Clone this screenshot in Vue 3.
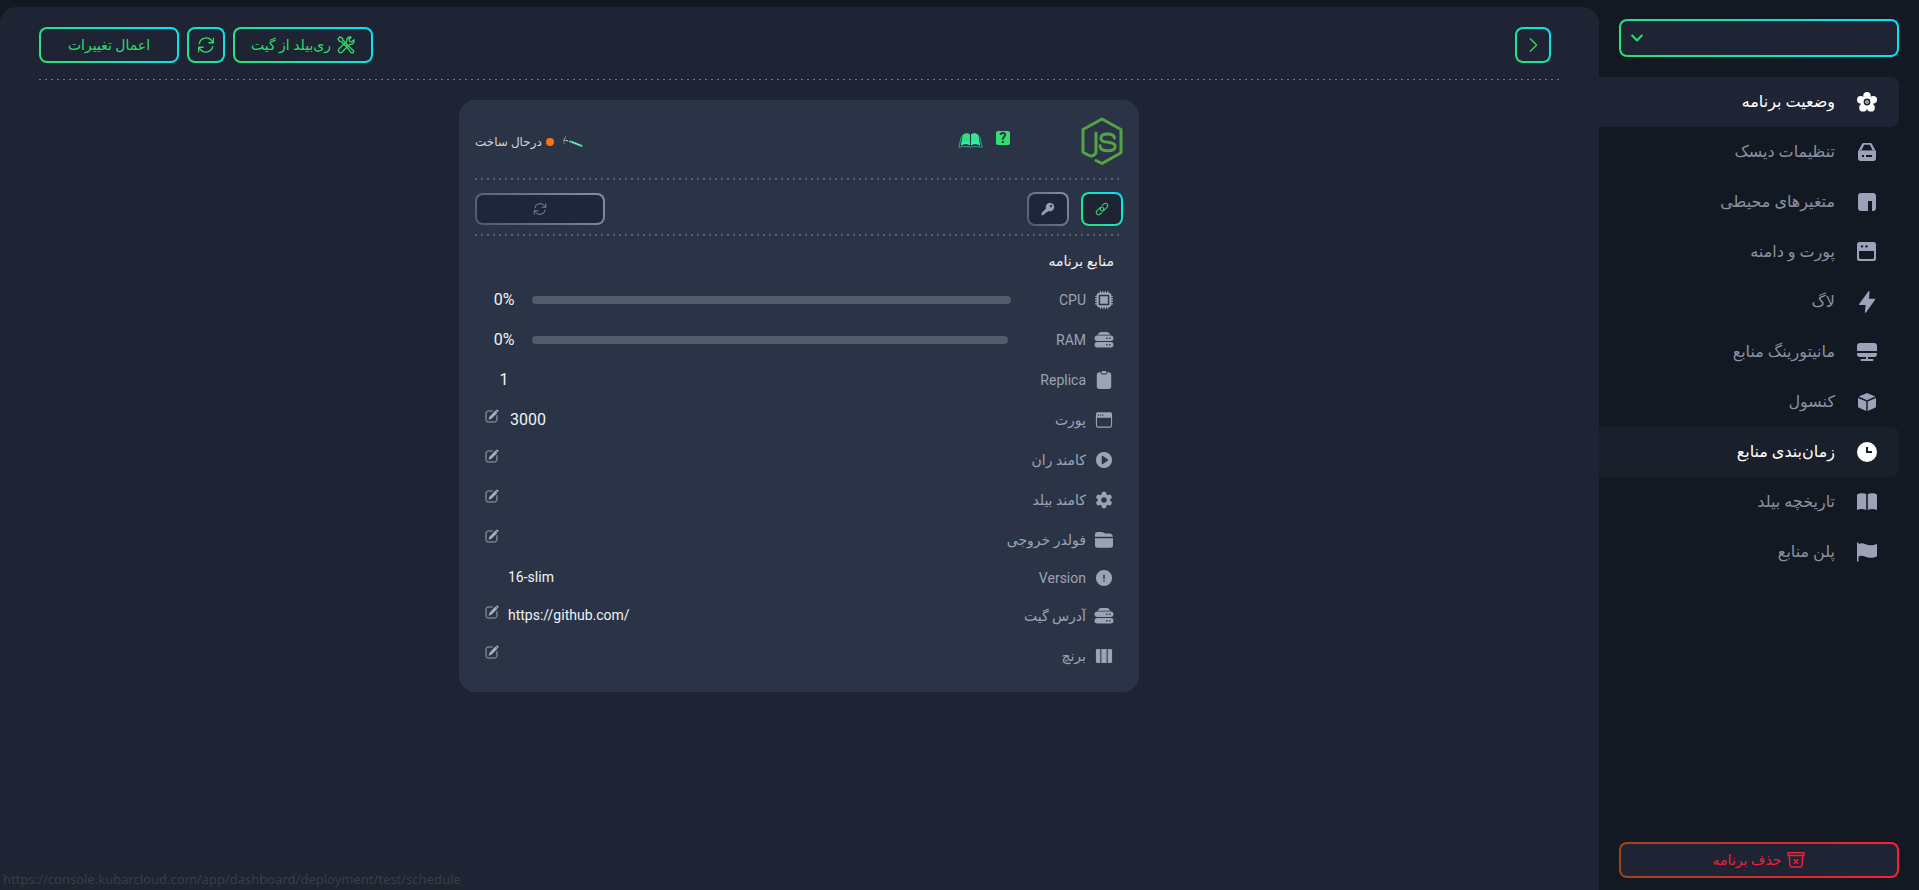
<script setup>
const menu = [
  { label: 'وضعیت برنامه', icon: 'flower', state: 'active' },
  { label: 'تنظیمات دیسک', icon: 'disk' },
  { label: 'متغیرهای محیطی', icon: 'npm' },
  { label: 'پورت و دامنه', icon: 'window' },
  { label: 'لاگ', icon: 'bolt' },
  { label: 'مانیتورینگ منابع', icon: 'monitor' },
  { label: 'کنسول', icon: 'cube' },
  { label: 'زمان‌بندی منابع', icon: 'clock', state: 'hovered' },
  { label: 'تاریخچه بیلد', icon: 'book' },
  { label: 'پلن منابع', icon: 'flag' }
]

const rows = [
  { label: 'CPU', icon: 'cpu', percent: 0 },
  { label: 'RAM', icon: 'server', percent: 0 },
  { label: 'Replica', icon: 'clipboard', count: '1' },
  { label: 'پورت', icon: 'browser', edit: true, value: '3000', large: true },
  { label: 'کامند ران', icon: 'play', edit: true },
  { label: 'کامند بیلد', icon: 'gear', edit: true },
  { label: 'فولدر خروجی', icon: 'folder', edit: true },
  { label: 'Version', icon: 'info', value: '16-slim', compact: true },
  { label: 'آدرس گیت', icon: 'server', edit: true, value: 'https://github.com/' },
  { label: 'برنچ', icon: 'columns', edit: true }
]

const icons = {
  flower: '<circle cx="10" cy="3.700" r="3.700"/><circle cx="16.300" cy="7.800" r="3.700"/><circle cx="13.900" cy="15.700" r="3.900"/><circle cx="6.100" cy="15.700" r="3.900"/><circle cx="3.700" cy="7.800" r="3.700"/><circle cx="10" cy="10" r="6.500"/><circle cx="10" cy="10" r="2.600" fill="#fff" stroke="#1e2433" stroke-width="1.600"/><circle cx="10" cy="10" r="1.300" fill="#8b90a0"/>',
  disk: '<path fill-rule="evenodd" d="M7 1h6c1 0 1.700.4 2.100 1.300L18.500 8.500h-17L4.900 2.300C5.300 1.400 6 1 7 1Zm.2 1.700L4.200 8.700h11.600l-3-6Z"/><path fill-rule="evenodd" d="M1 8.500h18v8c0 1.500-1 2.500-2.500 2.500h-13C2 19 1 18 1 16.500ZM5 13v2h2v-2Zm4 0v2h6v-2Z"/>',
  npm: '<path d="M4 1h12a3 3 0 0 1 3 3v12a3 3 0 0 1-3 3h-1V9h-4v10H4a3 3 0 0 1-3-3V4a3 3 0 0 1 3-3Z"/>',
  window: '<path fill-rule="evenodd" d="M2.500 0h14a2.500 2.500 0 0 1 2.500 2.500v14a2.500 2.500 0 0 1-2.500 2.500h-14A2.500 2.500 0 0 1 0 16.500v-14A2.500 2.500 0 0 1 2.500 0ZM2 9v6c0 1.500.5 2 1.500 2h12c1 0 1.500-.5 1.500-2V9ZM5 3.200a1.200 1.200 0 1 0 .1 0Zm4.500 0a1.200 1.200 0 1 0 .1 0Z"/>',
  bolt: '<path d="M11.500-.8c.6-.4 1 0 1 .6L12 6.800h5.300c.8 0 1 .6.6 1.200L9 20.600c-.5.600-1.200.3-1.100-.5l.7-7H3c-.9 0-1.200-.7-.7-1.400Z"/>',
  monitor: '<path d="M3 1h14a3 3 0 0 1 3 3v5H0V4a3 3 0 0 1 3-3ZM0 11h20v1a3 3 0 0 1-3 3h-6v2h4.500a1 1 0 0 1 0 2h-11a1 1 0 0 1 0-2H9v-2H3a3 3 0 0 1-3-3Z"/>',
  cube: '<path d="m10 1 8.300 3.500L10 8.200 1.700 4.500ZM1 6l8.300 3.600V19L2 15.800c-.7-.3-1-.8-1-1.400Zm18 0-8.300 3.600V19l7.300-3.200c.7-.3 1-.8 1-1.400Z"/>',
  clock: '<path fill-rule="evenodd" d="M10 0a10 10 0 1 1 0 20 10 10 0 0 1 0-20ZM9 5v6h6V9h-4V5Z"/>',
  book: '<path d="M0 2.500C3 .8 6.500 1 9.200 2v16C6.500 16.800 3 16.500 0 18ZM20 2.500C17 .8 13.500 1 10.800 2v16c2.700-1.200 6.200-1.500 9.200 0Z"/>',
  flag: '<path d="M0 .500h1.500V2c2-.8 4.200-1 7 .2 3.600 1.500 7 1.400 11.500-.2v12.500c-4.500 1.600-7.900 1.700-11.500.2-2.800-1.200-5-1-7-.2v5H0Z"/>',
  cpu: '<rect x="3" y="3" width="14" height="14" rx="2" fill="none" stroke="currentColor" stroke-width="2.200"/><rect x="5.700" y="5.700" width="8.600" height="8.600" rx=".8"/><path d="M5.200 1.200h10M5.200 18.800h10M1.200 5.200v10M18.800 5.200v10" stroke="currentColor" stroke-width="2" stroke-dasharray="1.600 1.100"/>',
  server: '<path d="M3 4.200C4.300 2 5 1 6.500 1h7c1.500 0 2.200 1 3.500 3.200Z"/><path fill-rule="evenodd" d="M2.500 5h15a2.900 2.900 0 0 1 0 6h-15a2.900 2.900 0 0 1 0-6ZM12.500 7.200v1.600H14V7.200Zm3.200 0v1.600h1.500V7.200ZM2.500 12.300h15a2.900 2.900 0 0 1 0 6h-15a2.900 2.900 0 0 1 0-6Zm10 2.200v1.600H14v-1.600Zm3.200 0v1.600h1.500v-1.600Z"/>',
  clipboard: '<path d="M5 1.500h1.300c0 1.700.7 2.500 2.200 2.500h3c1.500 0 2.200-.8 2.200-2.500H15a3 3 0 0 1 3 3V17a3 3 0 0 1-3 3H5a3 3 0 0 1-3-3V4.500a3 3 0 0 1 3-3Z"/><rect x="7.200" y="0" width="5.600" height="2.800" rx="1.400"/>',
  browser: '<path fill-rule="evenodd" d="M3 1.500h14a2 2 0 0 1 2 2v13a2 2 0 0 1-2 2H3a2 2 0 0 1-2-2v-13a2 2 0 0 1 2-2ZM2.200 7.500v8.200c0 1 .4 1.500 1.300 1.500h13c.9 0 1.300-.5 1.300-1.500V7.500ZM3 4v1.200h1.300V4Zm2.500 0v1.200h1.300V4Zm2.500 0v1.200h1.300V4Z"/>',
  play: '<path fill-rule="evenodd" d="M10 1a9 9 0 1 1 0 18 9 9 0 0 1 0-18ZM7.500 5.800v8.400c0 .5.500.7.900.5l6-4.100c.4-.3.400-.8 0-1.100l-6-4.200c-.4-.3-.9 0-.9.500Z"/>',
  gear: '<path fill-rule="evenodd" stroke="currentColor" stroke-width="1.400" stroke-linejoin="round" d="M8.600 1.500h2.800l.7 2.600 2 1.200 2.600-.7 1.400 2.500-1.900 1.900v2l1.900 1.900-1.400 2.500-2.600-.7-2 1.200-.7 2.600H8.600l-.7-2.600-2-1.200-2.600.7-1.400-2.500L3.800 11V9L1.900 7.100l1.400-2.500 2.600.7 2-1.200ZM10 6.300a3.700 3.700 0 1 0 0 7.400 3.700 3.700 0 0 0 0-7.400Z"/>',
  folder: '<path d="M0 6.500V3.600A2.600 2.600 0 0 1 2.600 1h5c1.800 0 2.300 1.700 4 1.700h4.900c1.800 0 3.200 1.500 3.500 3.800ZM0 8h20v7.700a2.800 2.800 0 0 1-2.800 2.800H2.800A2.800 2.800 0 0 1 0 15.700Z"/>',
  info: '<path fill-rule="evenodd" d="M10 1a9 9 0 1 1 0 18 9 9 0 0 1 0-18ZM9.200 6v5.300h1.600V6Zm0 6.500v1.500h1.600v-1.500Z"/>',
  columns: '<path d="M2.500 2.300h3.400v15.400H2.500A1.500 1.500 0 0 1 1 16.200V3.800a1.500 1.500 0 0 1 1.500-1.500ZM7.100 2.300h5.800v15.400H7.100ZM14.100 2.300h3.400A1.500 1.500 0 0 1 19 3.800v12.400a1.500 1.500 0 0 1-1.500 1.500h-3.400Z"/>',
  refresh: '<g fill="none" stroke="currentColor" stroke-width="1.400" stroke-linecap="round" stroke-linejoin="round"><path d="M2.500 8.500a7.800 7.800 0 0 1 14-3l1.700 2M18.200 2.500v5h-5M17.500 11.500a7.800 7.800 0 0 1-14 3l-1.700-2M1.800 17.500v-5h5"/></g>',
  tools: '<g fill="none" stroke="currentColor" stroke-width="1.500" stroke-linejoin="round"><path d="m1 3.200 2.200-2.200 3 1.700.3 1.800 5 5-1.700 1.700-5-5-1.800-.3ZM11 12.500l1.500-1.500 5.800 5a1.800 1.800 0 0 1-2.500 2.500Z"/><path d="M18.800 4.200 16.300 6.500 14 6l-.6-2.300L15.700 1.300c-2.800-.8-5.700 1.500-4.900 4.600L2 14.500a2.500 2.500 0 0 0 3.500 3.500l8.700-8.800c3 .8 5.500-2 4.600-5Z"/><path d="M3.700 16.300h.2"/></g>',
  back: '<path d="m7 3 7 7-7 7" fill="none" stroke="currentColor" stroke-width="1.500" stroke-linecap="round" stroke-linejoin="round"/>',
  link: '<g fill="none" stroke="currentColor" stroke-width="1.500" stroke-linecap="round"><path d="M8.500 7.700c-1.300 1.300-1.200 3.200-.2 4.300 1.200 1.300 3.100 1.300 4.400 0l4.300-4.300c1.500-1.500 1.500-3.500.2-4.900-1.400-1.300-3.400-1.300-4.900.2l-2 2M11.500 12.300c1.300-1.300 1.200-3.200.2-4.300-1.200-1.300-3.100-1.300-4.400 0L3 12.300c-1.500 1.500-1.500 3.500-.2 4.900 1.400 1.300 3.400 1.300 4.900-.2l2-2"/></g>',
  key: '<path fill-rule="evenodd" d="M12.700 1a6.200 6.200 0 1 1-2.200 12L8.700 14.700H6.600v2.100H4.500L3.200 19H.8v-3.300l6.300-6.300A6.200 6.200 0 0 1 12.700 1Zm1.500 3.400a1.500 1.500 0 1 0 .1 0Z"/>',
  edit: '<path d="M11 3H5a3.500 3.500 0 0 0-3.500 3.500V15A3.500 3.500 0 0 0 5 18.500h8.500A3.500 3.500 0 0 0 17 15v-6" fill="none" stroke="currentColor" stroke-width="2.200" opacity=".6"/><path d="m14.800 2.300 3 3L9.200 14l-4 1.300 1.200-4.200ZM15.700 1.300a2.100 2.100 0 0 1 3 3l-.4.4-3-3Z"/>',
  trash: '<g fill="none" stroke="currentColor" stroke-width="1.600" stroke-linejoin="round" stroke-linecap="round"><path d="M1.700 2h16.600c.5 0 .7.300.7.800v1.400c0 .5-.2.800-.7.800H1.700c-.5 0-.7-.3-.7-.8V2.800c0-.5.200-.8.700-.8ZM2.500 5l.8 11c.1 1 .7 1.800 2 1.800h9.400c1.300 0 1.900-.8 2-1.800l.8-11M8 9.500l4 4m0-4-4 4"/></g>',
  chevron: '<path d="m4 7 6 6 6-6" fill="none" stroke="currentColor" stroke-width="2.600" stroke-linecap="round" stroke-linejoin="round"/>'
}
</script>

<template>
  <div class="app" dir="rtl">
    <aside class="sidebar">
      <div class="picker">
        <select class="outlined" aria-label="انتخاب برنامه"><option></option></select>
        <svg class="picker-arrow" viewBox="0 0 20 20" v-html="icons.chevron"></svg>
      </div>
      <nav class="menu">
        <a v-for="item in menu" :key="item.icon" href="#" class="menu-item" :class="item.state">
          <svg class="menu-icon" viewBox="0 0 20 20" v-html="icons[item.icon]"></svg>
          <span class="menu-label">{{ item.label }}</span>
        </a>
      </nav>
      <button class="outlined danger">
        <svg class="icon-18" viewBox="0 0 20 20" v-html="icons.trash"></svg>
        <span>حذف برنامه</span>
      </button>
    </aside>

    <main class="main">
      <header class="toolbar">
        <button class="outlined square" aria-label="بازگشت">
          <svg class="icon-18" viewBox="0 0 20 20" v-html="icons.back"></svg>
        </button>
        <div class="actions">
          <button class="outlined wide">
            <svg class="icon-18" viewBox="0 0 20 20" v-html="icons.tools"></svg>
            <span>ری‌بیلد از گیت</span>
          </button>
          <button class="outlined reload" aria-label="بارگذاری مجدد">
            <svg class="icon-18" viewBox="0 0 20 20" v-html="icons.refresh"></svg>
          </button>
          <button class="outlined wide">اعمال تغییرات</button>
        </div>
      </header>
      <div class="dots thin"></div>

      <section class="card">
        <div class="card-head">
          <svg class="node-logo" viewBox="0 0 42 48" fill="none" stroke="#55a245">
            <path stroke-width="3" stroke-linejoin="round" stroke-linecap="round" d="M15 43.500l6 3 19-10.800V12.500L21 2 2 12.500v22.800l5 2.700c4 2 8 .5 8-4V16" />
            <path stroke-width="3" stroke-linecap="round" d="M33.500 21c-.5-3-2.500-4-7-4-4.200 0-6.600 1.400-6.600 4.200 0 3 2.500 3.600 7 4.100 5 .5 7.300 1.300 7.300 4.200 0 2.800-2.600 4.300-7.300 4.300-5.200 0-7.700-1.600-7.900-5" />
          </svg>
          <div class="helpers">
            <a href="#" class="help">?</a>
            <a href="#" class="guide" aria-label="راهنما">
              <svg viewBox="0 0 25 16">
                <path d="M4.500 2C7-.2 10.500-.2 12 1.800v10.500c-2.300-1.600-6-1.600-9 .2Z" fill="#30e07b" />
                <path d="M20.500 2C18-.2 14.500-.2 13 1.800v10.500c2.300-1.600 6-1.600 9 .2Z" fill="#36e68c" />
                <path d="M3 12.500c3-1.800 6.700-1.800 9-.2v-2.800c-3-1.500-6-1-8.500.2ZM22 12.500c-3-1.800-6.700-1.800-9-.2v-2.800c3-1.500 6-1 8.500.2Z" fill="#3be6b9" />
                <path d="M3.300 3.500 .8 14.300c4-.8 7.500-.9 10.500-.3h2.400c3-.6 6.500-.5 10.500.3L21.700 3.500" fill="none" stroke="#31a779" />
              </svg>
            </a>
          </div>
          <div class="status">
            <svg class="crane" viewBox="0 0 22 12">
              <path d="M3.500.500 1.800 5.500M1 4l3 1M1.500 6.500 2.500 8" fill="none" stroke="#9b9689" />
              <path d="m4 4.300 5 1.700" stroke="#d8dedc" stroke-dasharray="2 1" />
              <path d="m8 5.300 12.500 5" stroke="#29c98a" stroke-width="2" />
              <path d="m10 6 9 3.500" stroke="#c4f7e0" stroke-dasharray="2 1" />
            </svg>
            <span class="status-dot"></span>
            <span>درحال ساخت</span>
          </div>
        </div>
        <div class="dots"></div>

        <div class="card-actions">
          <button class="outlined tool" aria-label="لینک">
            <svg class="icon-14" viewBox="0 0 20 20" v-html="icons.link"></svg>
          </button>
          <button class="outlined tool muted" aria-label="کلید">
            <svg class="icon-14" viewBox="0 0 20 20" v-html="icons.key"></svg>
          </button>
          <button class="outlined restart muted" disabled aria-label="راه‌اندازی مجدد">
            <svg class="icon-14" viewBox="0 0 20 20" v-html="icons.refresh"></svg>
          </button>
        </div>
        <div class="dots"></div>

        <h2 class="title">منابع برنامه</h2>
        <ul class="rows">
          <li v-for="row in rows" :key="row.label" class="row" :class="{ compact: row.compact }">
            <svg class="row-icon" viewBox="0 0 20 20" v-html="icons[row.icon]"></svg>
            <span class="row-label">{{ row.label }}</span>
            <template v-if="row.percent !== undefined">
              <div class="bar"><div class="fill" :style="{ width: row.percent + '%' }"></div></div>
              <span class="amount" dir="ltr">{{ row.percent }}%</span>
            </template>
            <span v-else-if="row.count" class="amount end">{{ row.count }}</span>
            <div v-else class="field">
              <span v-if="row.value" class="value" :class="{ large: row.large }" dir="ltr">{{ row.value }}</span>
              <button v-if="row.edit" class="edit" :aria-label="'ویرایش ' + row.label">
                <svg class="icon-14" viewBox="0 0 20 20" v-html="icons.edit"></svg>
              </button>
              <span v-else class="edit"></span>
            </div>
          </li>
        </ul>
      </section>
    </main>
    <div class="link-hint" dir="ltr">https://console.kubarcloud.com/app/dashboard/deployment/test/schedule</div>
  </div>
</template>

<style>
body {
  margin: 0;
  background: #131923;
}
</style>

<style scoped>
* {
  box-sizing: border-box;
}
svg {
  display: block;
  flex: none;
  fill: currentColor;
  overflow: visible;
}
.app {
  display: grid;
  grid-template-columns: 320px minmax(0, 1fr);
  min-height: 100vh;
  background: #131923;
  color: #e5e7eb;
  font-family: Roboto, "DejaVu Sans", sans-serif;
  font-size: 14px;
}
.outlined {
  display: flex;
  align-items: center;
  justify-content: center;
  gap: 6px;
  height: 36px;
  padding: 0;
  border: 2px solid transparent;
  border-radius: 8px;
  background: linear-gradient(#1e2433, #1e2433) padding-box, linear-gradient(45deg, #2de170, #00e5ff) border-box;
  color: #2edb69;
  font: inherit;
}
.sidebar {
  display: flex;
  flex-direction: column;
  padding: 19px 20px 12px 0;
}
.picker {
  position: relative;
  margin-left: 20px;
}
.picker select {
  appearance: none;
  width: 100%;
  height: 38px;
}
.picker-arrow {
  position: absolute;
  left: 10px;
  top: 11px;
  width: 16px;
  height: 16px;
  color: #2edb69;
  pointer-events: none;
}
.menu {
  flex: 1;
  margin-top: 20px;
}
.menu-item {
  display: flex;
  align-items: center;
  gap: 22px;
  height: 50px;
  padding-right: 22px;
  border-radius: 0 8px 8px 0;
  color: #8b90a0;
  font-size: 16px;
  text-decoration: none;
}
.menu-label {
  padding-bottom: 2px;
}
.menu-icon {
  width: 20px;
  height: 20px;
  color: #9ca3b8;
}
.menu-item.active {
  background: #1e2433;
}
.menu-item.hovered {
  background: #1a202b;
}
.active, .hovered, .active .menu-icon, .hovered .menu-icon {
  color: #fff;
}
.outlined.danger {
  margin-left: 20px;
  background: linear-gradient(#1e2433, #1e2433) padding-box, linear-gradient(90deg, #9e4518, #ff1d38) border-box;
  color: #f41d3c;
}
.main {
  margin-top: 7px;
  padding: 20px 40px 20px 39px;
  border-radius: 16px 16px 0 0;
  background: #1e2433;
}
.toolbar {
  display: flex;
  justify-content: space-between;
  padding: 0 8px 16px 0;
}
.actions {
  display: flex;
  gap: 8px;
}
.square {
  width: 36px;
}
.reload {
  width: 38px;
}
.wide {
  width: 140px;
}
.icon-18 {
  width: 18px;
  height: 18px;
}
.icon-14 {
  width: 14px;
  height: 14px;
}
.dots {
  height: 2px;
  background: repeating-linear-gradient(90deg, #566072 0 2px, transparent 2px 6px);
}
.dots.thin {
  height: 1px;
  background: repeating-linear-gradient(90deg, #70798a 0 2px, transparent 2px 6px);
}
.card {
  max-width: 680px;
  margin: 20px auto 0;
  padding: 0 16px 16px;
  border-radius: 16px;
  background: #2a3446;
}
.card-head {
  display: flex;
  align-items: center;
  height: 78px;
  padding-top: 4px;
}
.node-logo {
  width: 42px;
  height: 48px;
  fill: none;
}
.helpers {
  display: flex;
  align-items: center;
  gap: 13px;
  margin-right: 71px;
}
.help {
  width: 14px;
  height: 14px;
  margin-bottom: 6px;
  border-radius: 2px;
  background: #34df70;
  color: #1e3a38;
  font-size: 14px;
  font-weight: 700;
  line-height: 14px;
  text-align: center;
  text-decoration: none;
}
.guide svg {
  width: 25px;
  height: 16px;
}
.status {
  display: flex;
  align-items: center;
  gap: 4px;
  margin-right: auto;
  padding-top: 2px;
  color: #d1d5db;
  font-size: 12px;
}
.status-dot {
  width: 8px;
  height: 8px;
  border-radius: 50%;
  background: #f97316;
}
.crane {
  width: 22px;
  height: 12px;
  margin-left: 4px;
}
.card-actions {
  display: flex;
  align-items: center;
  gap: 12px;
  padding: 12px 0 8px;
}
.tool {
  width: 42px;
  height: 34px;
}
.muted {
  background: linear-gradient(#20263a, #20263a) padding-box, linear-gradient(45deg, #4f586a, #8290a8) border-box;
  color: #94a0ba;
}
.restart {
  width: 130px;
  height: 32px;
  margin-right: auto;
  color: #7b8498;
}
.title {
  margin: 0;
  padding: 6px 9px 0 0;
  color: #f1f2f5;
  font-size: 14px;
  font-weight: 400;
  line-height: 38px;
}
.rows {
  margin: 0;
  padding: 0 8px 0 9px;
  list-style: none;
}
.row {
  display: flex;
  align-items: center;
  height: 40px;
  color: #9ca3b5;
}
.row.compact {
  height: 36px;
}
.row-icon {
  width: 18px;
  height: 18px;
  margin: 0 2px;
}
.row-label {
  margin-right: 7px;
}
.bar {
  flex: 1;
  height: 8px;
  margin: 0 48px 0 8px;
  border-radius: 4px;
  background: #535a69;
}
.fill {
  height: 100%;
  border-radius: 4px;
  background: #2edb69;
}
.amount {
  width: 40px;
  padding-bottom: 2px;
  color: #f1f2f5;
  font-size: 16px;
  text-align: center;
}
.end {
  margin-right: auto;
}
.field {
  display: flex;
  align-items: center;
  gap: 9px;
  margin-right: auto;
}
.value {
  padding-bottom: 2px;
  color: #f1f2f5;
}
.value.large {
  padding-left: 2px;
  font-size: 16px;
}
.edit {
  width: 15px;
  height: 22px;
  padding: 0;
  border: 0;
  background: none;
  color: #a6adbe;
}
.edit svg {
  margin-bottom: 8px;
}
.link-hint {
  position: fixed;
  left: 0;
  bottom: 0;
  padding: 0 3px;
  border-radius: 0 3px 0 0;
  background: #1e2430;
  color: #383e4b;
  font-family: "Noto Sans", sans-serif;
  font-size: 13px;
  line-height: 22px;
}
</style>
